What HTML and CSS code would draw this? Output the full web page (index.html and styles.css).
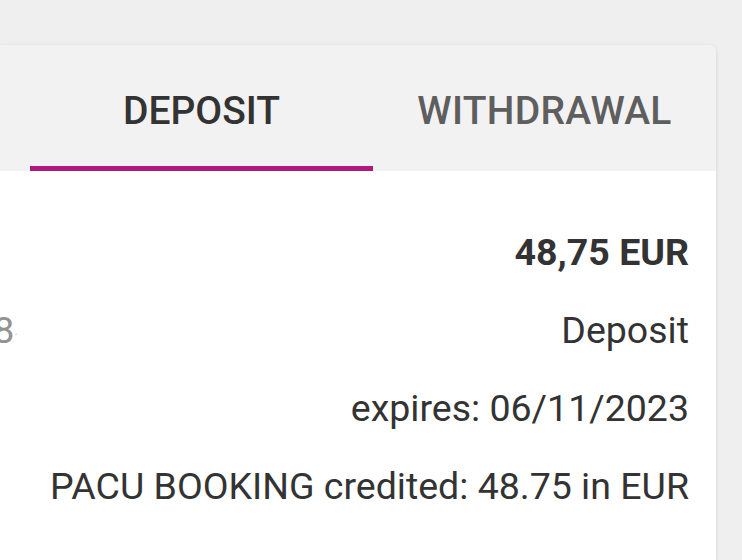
FILE: index.html
```html
<!DOCTYPE html>
<html lang="en">
<head>
    <meta charset="utf-8">
    <title>Transactions</title>
    <link rel="stylesheet" href="styles.css">
</head>
<body>
    <div class="card">
        <nav class="tabs">
            <div class="tab tab-active">DEPOSIT</div>
            <div class="tab">WITHDRAWAL</div>
        </nav>

        <div class="entry">
            <div class="row">
                <span class="amount">48,75 EUR</span>
            </div>
            <div class="row row-split">
                <div class="meta">28.10.2023 15:48<span class="fade">.</span></div>
                <span>Deposit</span>
            </div>
            <div class="row">
                <span>expires: 06/11/2023</span>
            </div>
            <div class="row">
                <span>PACU BOOKING credited: 48.75 in EUR</span>
            </div>
        </div>
    </div>
</body>
</html>
```

FILE: styles.css
```css
:root {
    --page-bg: #efefef;
    --tab-bg: #f2f2f2;
    --card-bg: #ffffff;
    --text-color: #333333;
    --text-muted: #5e5e5e;
    --meta-color: #939393;
    --accent-color: #b0187f;
}

* {
    box-sizing: border-box;
}

body {
    margin: 0;
    font-family: Roboto, "Noto Sans", sans-serif;
    background: var(--page-bg);
    color: var(--text-color);
    overflow: hidden;
}

.card {
    width: 716px;
    margin-top: 45px;
    background: var(--card-bg);
    border-radius: 0 7px 0 0;
    box-shadow: 0 1px 4px rgba(0, 0, 0, 0.12);
    min-height: calc(100vh - 45px);
}

.tabs {
    display: flex;
    padding-left: 30px;
    background: var(--tab-bg);
    border-radius: 0 7px 0 0;
}

.tab {
    width: 343px;
    height: 126px;
    display: flex;
    align-items: center;
    justify-content: center;
    padding-top: 10px;
    font-size: 39px;
    font-weight: 500;
    color: var(--text-muted);
    border-bottom: 5px solid transparent;
}

.tab + .tab {
    letter-spacing: 0.3px;
}

.tab-active {
    color: var(--text-color);
    border-bottom-color: var(--accent-color);
}

.entry {
    padding: 42px 27px 0 0;
    font-size: 37.5px;
    line-height: 78px;
}

.row {
    display: flex;
    justify-content: flex-end;
    white-space: nowrap;
}

.row-split {
    justify-content: space-between;
}

.amount {
    font-weight: 700;
}

.meta {
    width: 18px;
    display: flex;
    justify-content: flex-end;
    color: var(--meta-color);
}

.fade {
    color: #d6d6d6;
    font-size: 14px;
}
```
